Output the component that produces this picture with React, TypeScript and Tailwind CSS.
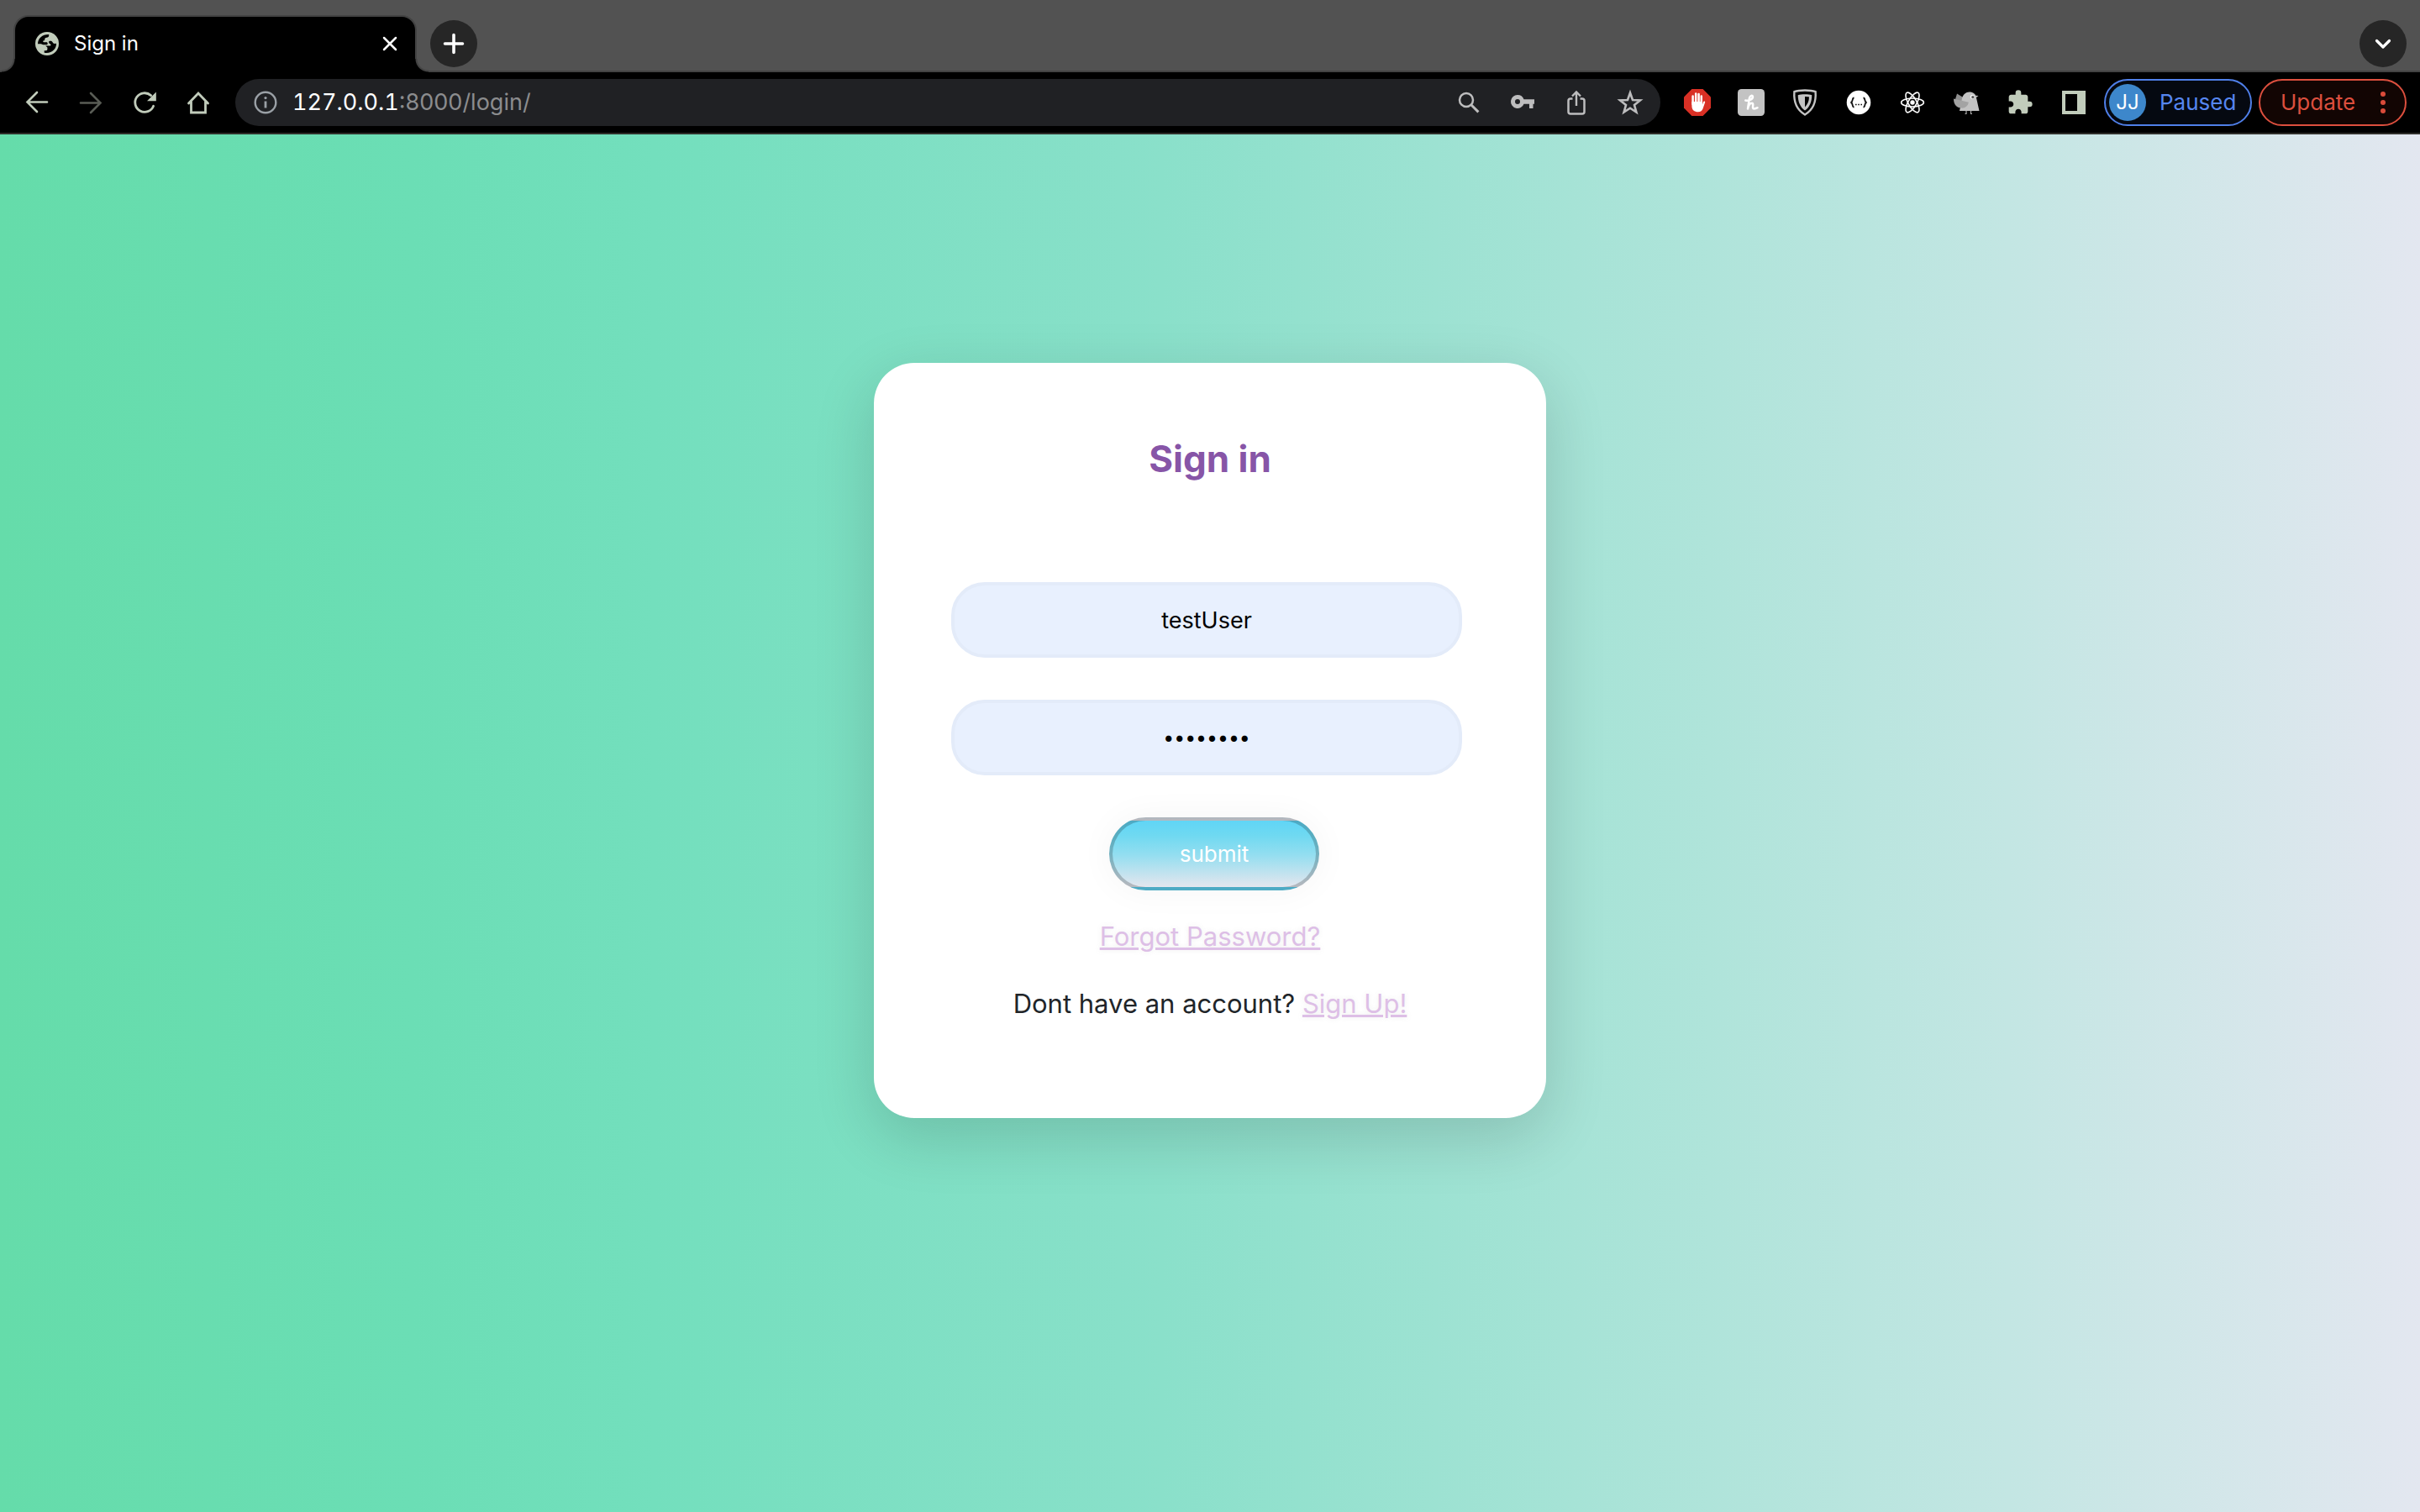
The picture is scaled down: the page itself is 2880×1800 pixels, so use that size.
import React from "react";

type IconProps = { className?: string };

const GlobeIcon = () => (
  <svg viewBox="0 0 28 28" className="size-7 shrink-0">
    <circle cx="14" cy="14" r="14" fill="#c1ccbb" />
    <path d="M3 14.300C3 7.500 8.500 2.800 16.200 3v1.500c0 1.300-1 2-2.700 2.200-1.500.1-2.200.7-2.200 2 0 1.100-.6 1.700-2 1.800-.4 1.100.2 1.800 1.500 1.800h2.400c1 0 1.500.6 1.500 1.600 0 .9-.6 1.400-1.600 1.400H9.500c-1.200 0-1.700-1-2.700-1z" fill="#000" />
    <path d="M16.200 11.200c1.600-.6 3.500-.5 4.200.8.600 1.300 1.400 2 2.600 2l2-.2C25.300 20.500 19 26.500 10.700 24.800v-2.600h2c1.300 0 1.700-.7 1.700-1.900v-1.900l-2.200-2 5.800.1c.8-1 .6-1.700-.3-2.200-1.300-.6-1.800-1.600-1.500-3.100z" fill="#000" />
  </svg>
);

const CloseIcon = () => (
  <svg viewBox="0 0 20 20" className="size-5">
    <path d="M3 3l14 14M17 3L3 17" stroke="#fff" strokeWidth="2.500" strokeLinecap="round" />
  </svg>
);

const PlusIcon = () => (
  <svg viewBox="0 0 28 28" className="size-7">
    <path d="M14 3.500v21M3.500 14h21" stroke="#fff" strokeWidth="3.600" strokeLinecap="round" />
  </svg>
);

const ChevronIcon = () => (
  <svg viewBox="0 0 24 24" className="size-6">
    <path d="M4.500 8.500L12 16l7.500-7.500" fill="none" stroke="#fff" strokeWidth="3.200" strokeLinecap="round" strokeLinejoin="round" />
  </svg>
);

const ArrowIcon = ({ className }: IconProps) => (
  <svg viewBox="0 0 32 32" className={className}>
    <path d="M28 15.500H4.500M16 4L4.500 15.500L16 27" fill="none" stroke="currentColor" strokeWidth="2.600" strokeLinecap="round" />
  </svg>
);

const ReloadIcon = () => (
  <svg viewBox="0 0 32 32" className="size-8">
    <path d="M26.600 20.200A11.300 11.300 0 1 1 23.600 7.600" fill="none" stroke="#c1ccbb" strokeWidth="2.800" strokeLinecap="round" />
    <path d="M29.800 3.500v10.800H19z" fill="#c1ccbb" />
  </svg>
);

const HomeIcon = () => (
  <svg viewBox="0 0 32 32" className="size-8">
    <path d="M4.500 17L16 5l11.500 12M7.500 15v13h17V15" fill="none" stroke="#c1ccbb" strokeWidth="2.800" strokeLinecap="round" />
  </svg>
);

const InfoIcon = () => (
  <svg viewBox="0 0 28 28" className="size-7 shrink-0">
    <circle cx="14" cy="14" r="12.300" fill="none" stroke="#9aa0a6" strokeWidth="2.400" />
    <path d="M14 12.500v8" stroke="#9aa0a6" strokeWidth="2.800" />
    <circle cx="14" cy="8.600" r="1.600" fill="#9aa0a6" />
  </svg>
);

const SearchIcon = () => (
  <svg viewBox="0 0 32 32" className="size-8">
    <circle cx="13" cy="13" r="8" fill="none" stroke="#bdbdbe" strokeWidth="2.500" />
    <path d="M18.800 18.800l8.600 8.600" stroke="#bdbdbe" strokeWidth="3" />
  </svg>
);

const KeyIcon = () => (
  <svg viewBox="0 0 32 32" className="size-8">
    <path fillRule="evenodd" fill="#bdbdbe" d="M10 7a8 8 0 1 0 7.500 10.700H24V23h4.500v-5.300H30V12.300H17.500A8 8 0 0 0 10 7zm0 5a3 3 0 1 1 0 6 3 3 0 0 1 0-6z" />
  </svg>
);

const ShareIcon = () => (
  <svg viewBox="0 0 32 32" className="size-8">
    <path d="M11.500 11.500H9a2.500 2.500 0 0 0-2.500 2.500v13A2.500 2.500 0 0 0 9 29.500h14a2.500 2.500 0 0 0 2.500-2.500V14a2.500 2.500 0 0 0-2.500-2.500h-2.500" fill="none" stroke="#bdbdbe" strokeWidth="2.500" />
    <path d="M16 20V4.500M11 8.500l5-5 5 5" fill="none" stroke="#bdbdbe" strokeWidth="2.400" />
  </svg>
);

const StarIcon = () => (
  <svg viewBox="0 0 32 32" className="size-8">
    <path d="M16 4.500l3 8.500 9 .4-7 5.600 2.400 8.600L16 22.700l-7.400 4.900L11 19l-7-5.600 9-.4z" fill="none" stroke="#bdbdbe" strokeWidth="2.600" />
  </svg>
);

const AdBlockIcon = () => (
  <svg viewBox="0 0 32 32" className="size-8">
    <path d="M9.400 0h13.200L32 9.400v13.200L22.600 32H9.400L0 22.600V9.400z" fill="#d93025" />
    <path d="M10.600 18V8.500M14.200 16V5.500M17.600 16V6M20.800 17V8.500" stroke="#fff" strokeWidth="2.500" strokeLinecap="round" />
    <path d="M9.400 15H22v3.500l1-3c.6-1.500 2.500-1.200 2.100.4l-2.600 7.600c-.8 2.400-2.600 3.700-5.500 3.700-4.600 0-7.600-2.400-7.600-7z" fill="#fff" />
  </svg>
);

const HoneyIcon = () => (
  <svg viewBox="0 0 32 32" className="size-8">
    <rect width="32" height="32" rx="4.500" fill="#c3c3c3" />
    <path d="M9.300 13.500c3 .8 8.800-.9 8.700-4.200-.1-2.200-3.300-1.900-4 1.200L12 23.500c.8-4.200 3-6.800 5-6.800 2.800 0-.6 6.800 2.300 6.800 1.600 0 3-.8 4.200-1.300" fill="none" stroke="#fff" strokeWidth="2.500" strokeLinecap="round" strokeLinejoin="round" />
  </svg>
);

const ShieldIcon = () => (
  <svg viewBox="0 0 32 32" className="size-8">
    <path d="M16 1.500c5 0 9.500.5 12.600 1.700C29.500 15 25.500 25 16 30.500 6.500 25 2.500 15 3.400 3.200 6.500 2 11 1.500 16 1.500z" fill="none" stroke="#c4c4c4" strokeWidth="2.400" />
    <path d="M16 6.200c3.500 0 6.300.3 8.300 1C24.300 15 21.700 21.500 16 25.600 10.300 21.500 7.700 15 7.700 7.200c2-.7 4.800-1 8.300-1z" fill="#c4c4c4" />
    <path d="M16 9c2 0 3.800.2 5 .6-.2 4.700-1.700 8.600-5 11.900z" fill="#000" />
  </svg>
);

const JsonIcon = () => (
  <svg viewBox="0 0 32 32" className="size-8">
    <circle cx="16" cy="16" r="14.300" fill="#fff" />
    <path d="M10.500 10.500C7.500 10.500 9.800 16 6.300 16c3.500 0 1.200 5.500 4.200 5.500M21.500 10.500c3 0 .7 5.500 4.200 5.500-3.500 0-1.200 5.500-4.200 5.500" fill="none" stroke="#111" strokeWidth="1.800" />
    <path d="M12 18.500h1.600M15.200 18.500h1.600M18.400 18.500H20" stroke="#111" strokeWidth="1.600" />
  </svg>
);

const ReactIcon = () => (
  <svg viewBox="0 0 32 32" className="size-8">
    <g fill="none" stroke="#fff" strokeWidth="1.600">
      <ellipse cx="16" cy="16" rx="13.400" ry="5" />
      <ellipse cx="16" cy="16" rx="13.400" ry="5" transform="rotate(60 16 16)" />
      <ellipse cx="16" cy="16" rx="13.400" ry="5" transform="rotate(120 16 16)" />
    </g>
    <circle cx="16" cy="16" r="2.700" fill="#fff" />
  </svg>
);

const BirdIcon = () => (
  <svg viewBox="0 0 32 32" className="size-8">
    <path d="M5 5.500L14 11l-4 6-7-5z" fill="#8f8f8f" />
    <path d="M11 11C12.500 6.500 15.500 3.600 19.500 3.600c4 0 6.900 2 7.700 4.200l3.300.3-2.600 2L31.500 26H8z" fill="#c2c2c2" />
    <path d="M1 11.500l17.800 4.300C18 20.500 14.500 23 10 22.600 4.500 22.300 1 18.500 1 11.500z" fill="#a3a3a3" />
    <circle cx="23.300" cy="9.300" r="2.500" fill="#f2f2f2" />
    <circle cx="23.800" cy="9.600" r="1.600" fill="#555" />
    <path d="M16 26v3.500h-1.500M21.500 26v3.500H23" fill="none" stroke="#aaa" strokeWidth="1.200" />
  </svg>
);

const PuzzleIcon = () => (
  <svg viewBox="0 0 24 24" className="size-8">
    <path fill="#c1ccbb" d="M20.500 11H19V7c0-1.100-.9-2-2-2h-4V3.500a2.500 2.500 0 0 0-5 0V5H4c-1.100 0-1.990.9-1.990 2v3.800H3.500c1.490 0 2.700 1.210 2.700 2.700s-1.210 2.700-2.700 2.700H2V20c0 1.100.9 2 2 2h3.800v-1.500c0-1.490 1.210-2.700 2.700-2.700s2.700 1.210 2.700 2.700V22H17c1.100 0 2-.9 2-2v-4h1.500a2.500 2.500 0 0 0 0-5z" />
  </svg>
);

const SidePanelIcon = () => (
  <svg viewBox="0 0 32 32" className="size-8">
    <path fillRule="evenodd" fill="#c1ccbb" d="M2 2h28v28H2zM6 6v20h14V6z" />
  </svg>
);

const DotsIcon = () => (
  <svg viewBox="0 0 8 28" className="h-7 w-2">
    <circle cx="4" cy="4" r="3" fill="#d94b3a" />
    <circle cx="4" cy="14" r="3" fill="#d94b3a" />
    <circle cx="4" cy="24" r="3" fill="#d94b3a" />
  </svg>
);

const IconButton = ({ label, children }: { label: string; children: React.ReactNode }) => (
  <button type="button" aria-label={label} className="flex size-16 shrink-0 items-center justify-center">
    {children}
  </button>
);

const TabStrip = () => (
  <div className="flex h-[86px] items-end border-b-2 border-[#434343] bg-[#525252] pr-4">
    <div className="relative -mb-0.5 ml-[18px] flex h-[66px] w-[476px] items-center rounded-t-2xl bg-black px-6 pb-0.5 shadow-[0_0_0_2px_#434343] [clip-path:inset(-2px_-20px_0_-20px)]">
      <GlobeIcon />
      <span className="ml-[18px] flex-1 text-2xl leading-8 text-white">Sign in</span>
      <button type="button" aria-label="Close tab" className="-mr-2 flex size-7 items-center justify-center">
        <CloseIcon />
      </button>
      <span className="absolute bottom-0 right-full size-4 bg-[radial-gradient(circle_at_0_0,#525252_13px,#434343_14px,#434343_15px,#000_16px)]" />
      <span className="absolute bottom-0 left-full size-4 bg-[radial-gradient(circle_at_100%_0,#525252_13px,#434343_14px,#434343_15px,#000_16px)]" />
    </div>
    <button type="button" aria-label="New tab" className="mb-1 ml-[18px] flex size-14 items-center justify-center rounded-full bg-[#262626]">
      <PlusIcon />
    </button>
    <button type="button" aria-label="Search tabs" className="mb-1 ml-auto flex size-14 items-center justify-center rounded-full bg-[#262626]">
      <ChevronIcon />
    </button>
  </div>
);

const Toolbar = () => (
  <div className="flex h-[74px] items-center border-b-2 border-[#2f2e2a] bg-black pl-3 pr-4">
    <IconButton label="Back">
      <ArrowIcon className="size-8 text-[#c1ccbb]" />
    </IconButton>
    <IconButton label="Forward">
      <ArrowIcon className="size-8 rotate-180 text-[#595c55]" />
    </IconButton>
    <IconButton label="Reload">
      <ReloadIcon />
    </IconButton>
    <IconButton label="Home">
      <HomeIcon />
    </IconButton>
    <div className="ml-3 flex h-14 flex-1 items-center rounded-full bg-[#202124] pl-[22px] pr-1">
      <InfoIcon />
      <div className="ml-[18px] flex-1 text-[27px] leading-9 text-[#8b8c8e]">
        <span className="tabular-nums text-white">127.0.0.1</span>:8000/login/
      </div>
      <IconButton label="Zoom">
        <SearchIcon />
      </IconButton>
      <IconButton label="Passwords">
        <KeyIcon />
      </IconButton>
      <IconButton label="Share">
        <ShareIcon />
      </IconButton>
      <IconButton label="Bookmark">
        <StarIcon />
      </IconButton>
    </div>
    <div className="flex pl-3 pr-1">
      <IconButton label="Ad blocker">
        <AdBlockIcon />
      </IconButton>
      <IconButton label="Honey">
        <HoneyIcon />
      </IconButton>
      <IconButton label="Shield">
        <ShieldIcon />
      </IconButton>
      <IconButton label="JSON viewer">
        <JsonIcon />
      </IconButton>
      <IconButton label="React tools">
        <ReactIcon />
      </IconButton>
      <IconButton label="Bird">
        <BirdIcon />
      </IconButton>
      <IconButton label="Extensions">
        <PuzzleIcon />
      </IconButton>
      <IconButton label="Side panel">
        <SidePanelIcon />
      </IconButton>
    </div>
    <button type="button" className="flex h-14 w-44 items-center rounded-full border-2 border-[#4f7fe8] bg-[#050911] pl-1 text-[26px] leading-8 text-[#5686f0]">
      <span className="mr-4 flex size-11 items-center justify-center rounded-full bg-[#3d87cb] text-2xl text-white">JJ</span>
      Paused
    </button>
    <button type="button" className="ml-2 flex h-14 w-44 items-center justify-between rounded-full border-2 border-[#dc4f3e] bg-[#120503] pl-6 pr-[22px] text-[26px] leading-8 text-[#dc4f3e]">
      Update
      <DotsIcon />
    </button>
  </div>
);

const inputClass =
  "mr-2 block h-[90px] w-[608px] rounded-[40px] border-4 border-[#e3ebf9] bg-[#e8f0fe] px-10 text-center text-black outline-none";

const linkClass = "text-[#ddbfe6] underline [text-shadow:0_0_6px_rgba(117,117,117,0.12)]";

const SignInCard = () => (
  <main className="mx-auto mt-[272px] flex w-[800px] flex-col items-center rounded-[48px] bg-white pb-28 pt-[84px] shadow-[0_22px_70px_4px_rgba(0,0,0,0.14)]">
    <h1 className="text-[44px] font-bold leading-[60px] text-[#8755a7]">Sign in</h1>
    <form className="mt-[117px] flex flex-col items-center" onSubmit={(e) => e.preventDefault()}>
      <input type="text" aria-label="Username" defaultValue="testUser" className={`${inputClass} text-[27px]`} />
      <input type="password" aria-label="Password" defaultValue="testUser" className={`${inputClass} mt-[50px] text-[23px]`} />
      <button
        type="submit"
        className="ml-2.5 mt-[50px] h-[87px] w-[250px] rounded-full border-4 border-black/20 bg-[linear-gradient(#60d5f6,#6fd9f1_22%,#94def0_52%,#e4e6ee)] text-[26px] text-white shadow-[0_0_40px_2px_rgba(0,0,0,0.04)]"
      >
        submit
      </button>
    </form>
    <a href="#forgot" className={`${linkClass} mt-[31px] text-[31px] leading-[48px]`}>
      Forgot Password?
    </a>
    <p className="mt-8 text-[31px] leading-[48px] text-[#212529]">
      Dont have an account?{" "}
      <a href="#signup" className={linkClass}>
        Sign Up!
      </a>
    </p>
  </main>
);

export default function App() {
  return (
    <div className="flex min-h-screen flex-col font-[Inter,'Liberation_Sans',sans-serif]">
      <header>
        <TabStrip />
        <Toolbar />
      </header>
      <div className="flex-1 bg-[linear-gradient(to_right,#65dcaa,#6bdeb5_17%,#73dfbd_27%,#8ae0ca_48%,#a6e3d6_65%,#c3e6e3_83%,#e3e7f0)]">
        <SignInCard />
      </div>
    </div>
  );
}
